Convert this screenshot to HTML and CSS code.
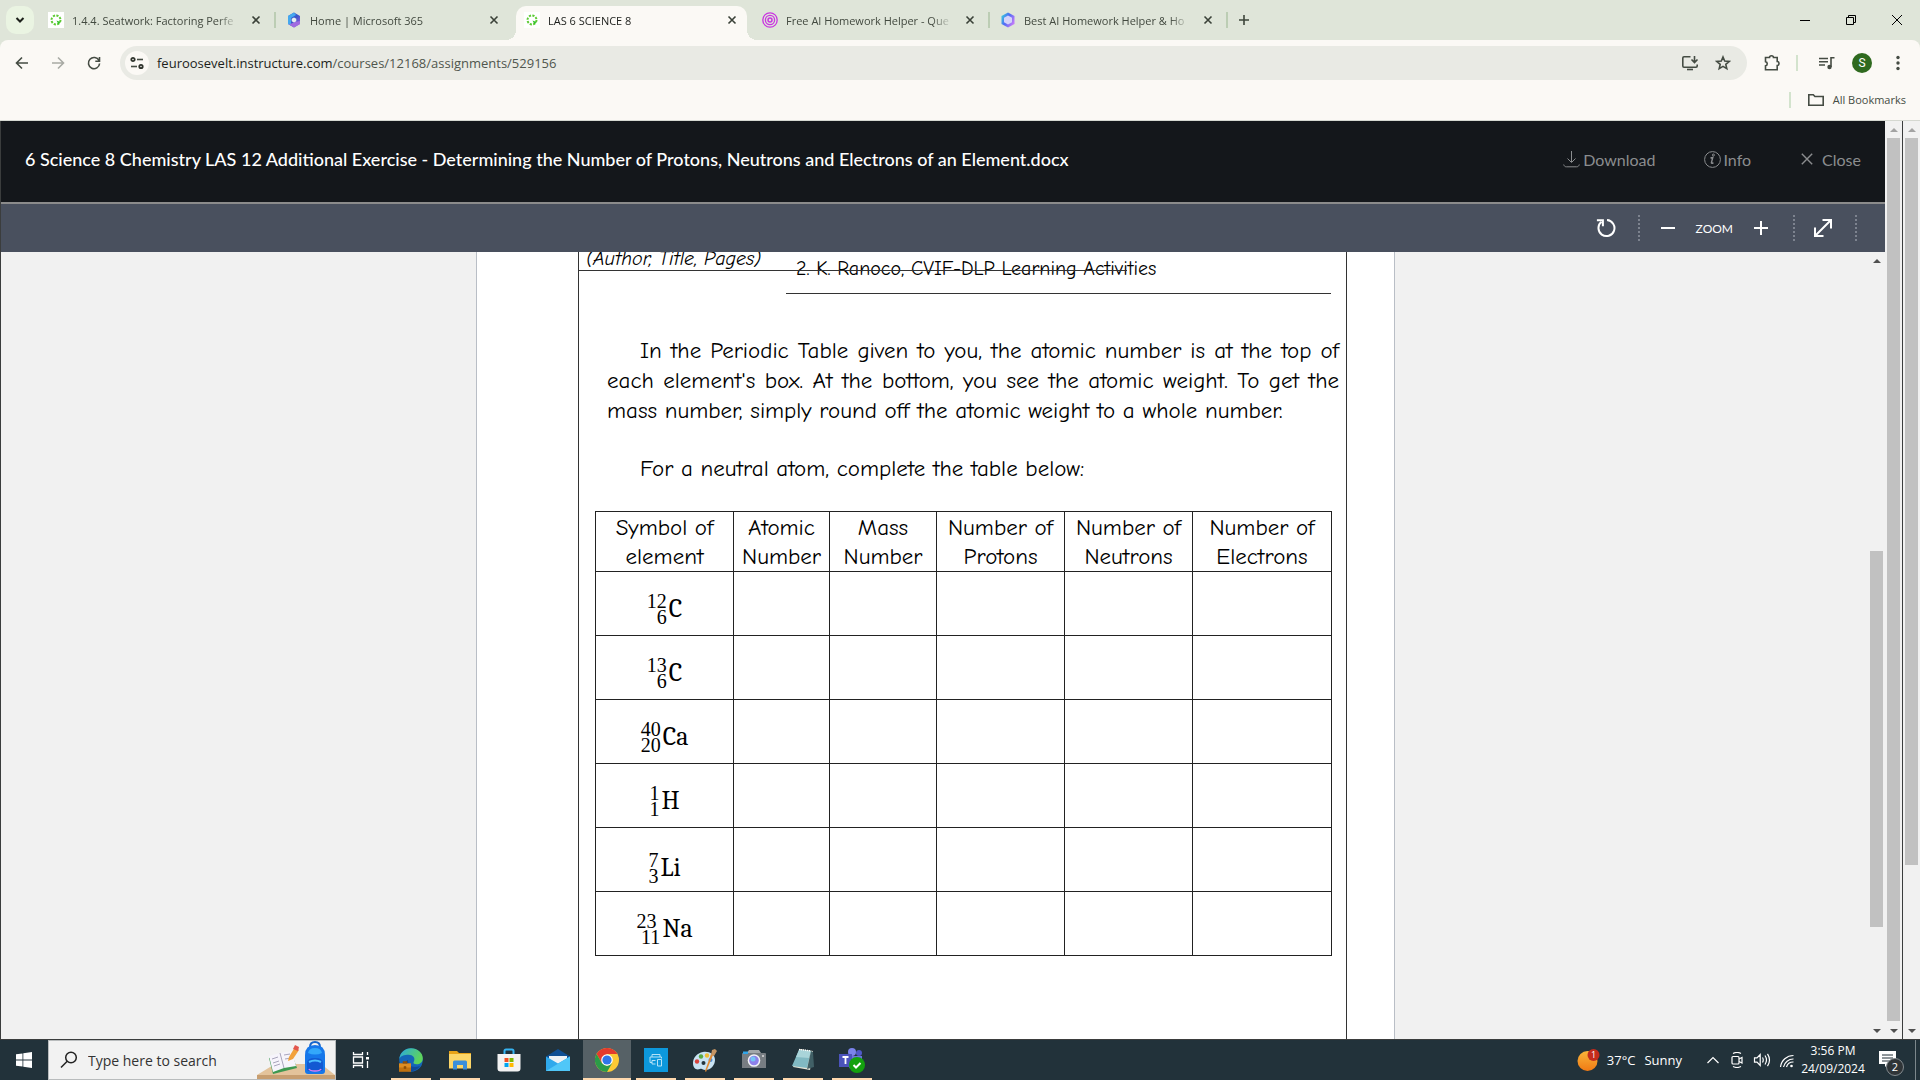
FILE: index.html
```html
<!DOCTYPE html>
<html lang="en">
<head>
<meta charset="utf-8">
<title>LAS 6 SCIENCE 8</title>
<link rel="stylesheet" href="styles.css">
</head>
<body>
<header class="browser">
  <div class="tabstrip">
    <button class="tab-search" aria-label="Search tabs"><svg width="12" height="12" viewBox="0 0 12 12"><path d="M2.5 4l3.5 3.500L9.500 4" fill="none" stroke="#1d211b" stroke-width="2"/></svg></button>
    <div class="tab">
      <svg class="fav" viewBox="0 0 16 16"><rect width="16" height="16" fill="#fff"/><circle cx="8" cy="8" r="4.500" fill="none" stroke="#5ecb34" stroke-width="2" stroke-dasharray="2.200 1.300"/><path d="M8.500 8.500l4 1.500-2 2.500z" fill="#34c42c"/></svg>
      <span class="tab-title">1.4.4. Seatwork: Factoring Perfe</span>
      <button class="tab-close" aria-label="Close tab"><svg width="10" height="10" viewBox="0 0 10 10"><path d="M1.500 1.500l7 7m0-7l-7 7"/></svg></button>
    </div>
    <i class="tab-sep"></i>
    <div class="tab">
      <svg class="fav" viewBox="0 0 16 16"><defs><linearGradient id="m1" x1="0" y1="0" x2="1" y2="1"><stop offset="0" stop-color="#2b6de0"/><stop offset=".5" stop-color="#3a55c8"/><stop offset="1" stop-color="#b35fe0"/></linearGradient></defs><path d="M8 .5l6 3.500v8L8 15.500 2 12V4z" fill="url(#m1)"/><path d="M8 .5L2 4v8l3 1.500V6l5-3z" fill="#45a8ee"/><path d="M14 9v3l-6 3.500-5-3 6-2.500z" fill="#a06ae0"/><path d="M8 5.500l2.300 1.200v2.600L8 10.500 5.700 9.300V6.700z" fill="#e8edf0"/></svg>
      <span class="tab-title">Home | Microsoft 365</span>
      <button class="tab-close" aria-label="Close tab"><svg width="10" height="10" viewBox="0 0 10 10"><path d="M1.500 1.500l7 7m0-7l-7 7"/></svg></button>
    </div>
    <i class="tab-sep hidden"></i>
    <div class="tab active">
      <svg class="fav" viewBox="0 0 16 16"><rect width="16" height="16" fill="#fff"/><circle cx="8" cy="8" r="4.500" fill="none" stroke="#5ecb34" stroke-width="2" stroke-dasharray="2.200 1.300"/><path d="M8.500 8.500l4 1.500-2 2.500z" fill="#34c42c"/></svg>
      <span class="tab-title">LAS 6 SCIENCE 8</span>
      <button class="tab-close" aria-label="Close tab"><svg width="10" height="10" viewBox="0 0 10 10"><path d="M1.500 1.500l7 7m0-7l-7 7"/></svg></button>
    </div>
    <i class="tab-sep hidden"></i>
    <div class="tab">
      <svg class="fav" viewBox="0 0 16 16" fill="none" stroke="#c935e0"><circle cx="8" cy="8" r="7.200" stroke-width="1.300"/><circle cx="8" cy="8" r="4.600" stroke-width="1.300"/><circle cx="8" cy="8" r="2" stroke-width="1.500"/></svg>
      <span class="tab-title">Free AI Homework Helper - Que</span>
      <button class="tab-close" aria-label="Close tab"><svg width="10" height="10" viewBox="0 0 10 10"><path d="M1.500 1.500l7 7m0-7l-7 7"/></svg></button>
    </div>
    <i class="tab-sep"></i>
    <div class="tab">
      <svg class="fav" viewBox="0 0 16 16"><defs><linearGradient id="g2" x1="0" y1="0" x2="1" y2=".6"><stop offset="0" stop-color="#35e0d8"/><stop offset=".5" stop-color="#4f6cf5"/><stop offset="1" stop-color="#c07af8"/></linearGradient></defs><path d="M8 .5l6.500 3.500v8L8 15.500 1.500 12V4z" fill="url(#g2)"/><path d="M8 3.500l4 2.200v4.600l-4 2.200-4-2.200V5.700z" fill="#d5d2fa"/></svg>
      <span class="tab-title">Best AI Homework Helper &amp; Ho</span>
      <button class="tab-close" aria-label="Close tab"><svg width="10" height="10" viewBox="0 0 10 10"><path d="M1.500 1.500l7 7m0-7l-7 7"/></svg></button>
    </div>
    <i class="tab-sep"></i>
    <button class="new-tab" aria-label="New tab"><svg width="12" height="12" viewBox="0 0 12 12"><path d="M6 1v10M1 6h10" stroke="#3d453a" stroke-width="1.600"/></svg></button>
    <div class="window-buttons">
      <button aria-label="Minimize"><svg width="12" height="12" viewBox="0 0 12 12"><path d="M1 6.500h10"/></svg></button>
      <button aria-label="Restore"><svg width="12" height="12" viewBox="0 0 12 12"><path d="M1.500 3.500h7v7h-7zM3.500 3.500v-2h7v7h-2"/></svg></button>
      <button aria-label="Close"><svg width="12" height="12" viewBox="0 0 12 12"><path d="M1 1l10 10M11 1L1 11"/></svg></button>
    </div>
  </div>
  <div class="toolbar">
    <nav class="nav-buttons">
      <button aria-label="Back"><svg width="16" height="16" viewBox="0 0 16 16"><path d="M14 8H3M8 2.500L2.500 8 8 13.500"/></svg></button>
      <button class="dim" aria-label="Forward"><svg width="16" height="16" viewBox="0 0 16 16"><path d="M2 8h11M8 2.500L13.500 8 8 13.500"/></svg></button>
      <button aria-label="Reload"><svg width="16" height="16" viewBox="0 0 16 16"><path d="M13 5.500A5.600 5.600 0 1 0 13.600 8.500M13.500 2v4.200H9.300"/></svg></button>
    </nav>
    <div class="omnibox">
      <button class="site-info" aria-label="Site information"><svg width="16" height="16" viewBox="0 0 16 16" fill="none" stroke="#2e332c" stroke-width="1.800"><circle cx="4" cy="4.500" r="1.700"/><path d="M8 4.500h6"/><circle cx="12" cy="11.500" r="1.700"/><path d="M2 11.500h6"/></svg></button>
      <a class="url" href="#">feuroosevelt.instructure.com<span>/courses/12168/assignments/529156</span></a>
      <button aria-label="Install"><svg width="18" height="16" viewBox="0 0 18 16"><path d="M9.500 1.800H3a1.200 1.200 0 0 0-1.200 1.200v8A1.200 1.200 0 0 0 3 12.200h12a1.200 1.200 0 0 0 1.200-1.200V9.500M13.500 1v6M10.500 4.500l3 3 3-3"/><path d="M6 14.500h6" stroke-width="2"/></svg></button>
      <button aria-label="Bookmark"><svg width="16" height="16" viewBox="0 0 16 16"><path d="M8 2l1.700 4.100 4.400.4-3.300 2.900 1 4.300L8 11.400l-3.800 2.300 1-4.300L1.900 6.500l4.400-.4z" stroke-width="1.400"/></svg></button>
    </div>
    <button class="ext" aria-label="Extensions"><svg width="18" height="18" viewBox="0 0 18 18"><path d="M2.500 3.500h4a2 1.800 0 0 1 4 0h3.700v4a1.800 2 0 0 1 0 4v4.300H2.500v-3.900a2.200 2.200 0 0 0 0-4.300z"/></svg></button>
    <i class="bar-sep"></i>
    <button class="media" aria-label="Media"><svg width="18" height="16" viewBox="0 0 18 16"><path d="M1 3.500h9M1 6.800h9M1 10h6M13 12V2.800h3.500"/><circle cx="11.500" cy="12" r="2.200" fill="#454c43" stroke="none"/></svg></button>
    <button class="avatar" aria-label="Profile">S</button>
    <button class="menu" aria-label="Menu"><svg width="4" height="16" viewBox="0 0 4 16"><g fill="#454c43" stroke="none"><circle cx="2" cy="2.500" r="1.700"/><circle cx="2" cy="8" r="1.700"/><circle cx="2" cy="13.500" r="1.700"/></g></svg></button>
  </div>
  <div class="bookmarks">
    <i class="bar-sep"></i>
    <button><svg width="18" height="14" viewBox="0 0 18 14"><path d="M1.800 1.800h4.500l1.600 1.700h8.300v8.700H1.800z"/></svg>All Bookmarks</button>
  </div>
</header>

<main class="frame">
  <section class="preview">
    <div class="preview-head">
      <h1>6 Science 8 Chemistry LAS 12 Additional Exercise - Determining the Number of Protons, Neutrons and Electrons of an Element.docx</h1>
      <nav class="preview-actions">
        <a href="#"><svg width="17" height="17" viewBox="0 0 17 17"><path d="M8.500 0v11M4.500 7.500l4 4 4-4M.7 13.500c.6 1.800 1.300 2.300 2.800 2.300h10c1.500 0 2.200-.5 2.800-2.300"/></svg>Download</a>
        <a class="info" href="#"><svg width="17" height="17" viewBox="0 0 17 17"><circle cx="8.500" cy="8.500" r="7.900"/><path d="M6.500 7l2.300-.6-1.400 5.200c-.2 1 .8.900 2 0" stroke-width="1.400"/><circle cx="9.400" cy="4" r="1" fill="#8b8d8f" stroke="none"/></svg>Info</a>
        <a class="close" href="#"><svg width="12" height="12" viewBox="0 0 12 12"><path d="M.8.8l10.400 10.400M11.200.8L.8 11.200" stroke-width="1.400"/></svg>Close</a>
      </nav>
    </div>
    <div class="doc-tools">
      <button class="rotate" aria-label="Rotate"><svg width="20" height="20" viewBox="0 0 20 20"><path d="M5.500 3.800A8 8 0 1 0 11 2.100" stroke-width="2"/><path d="M.9 2.300h6v6" stroke-width="2"/></svg></button>
      <i class="dots"></i>
      <button class="minus" aria-label="Zoom out"><svg width="14" height="14" viewBox="0 0 14 14"><path d="M0 7h14" stroke-width="2"/></svg></button>
      <span class="zoom-label">ZOOM</span>
      <button class="plus" aria-label="Zoom in"><svg width="14" height="14" viewBox="0 0 14 14"><path d="M0 7h14M7 0v14" stroke-width="2"/></svg></button>
      <i class="dots"></i>
      <button class="expand" aria-label="Full screen"><svg width="18" height="18" viewBox="0 0 18 18"><path d="M2 16L16 2M8.500 1H17v8.500M1 8.500V17h8.500" stroke-width="2"/></svg></button>
      <i class="dots"></i>
    </div>
    <div class="viewer">
      <div class="canvas">
        <article class="page">
          <div class="sheet">
            <div class="reference">
              <p class="ref-label">(Author, Title, Pages)</p>
              <p class="ref-text">2. K. Ranoco, CVIF-DLP Learning Activities</p>
              <i class="rule"></i>
            </div>
            <p class="para"><span class="just first">In the Periodic Table given to you, the atomic number is at the top of</span> <span class="just">each element's box. At the bottom, you see the atomic weight. To get the</span> <span class="last">mass number, simply round off the atomic weight to a whole number.</span></p>
            <p class="para lead"><span class="first">For a neutral atom, complete the table below:</span></p>
            <table class="atoms">
              <colgroup><col class="c-sym"><col class="c-atomic"><col class="c-mass"><col class="c-num"><col class="c-num"><col class="c-elec"></colgroup>
              <thead><tr><th>Symbol of<br>element</th><th>Atomic<br>Number</th><th>Mass<br>Number</th><th>Number of<br>Protons</th><th>Number of<br>Neutrons</th><th>Number of<br>Electrons</th></tr></thead>
              <tbody>
                <tr><td><span class="nuclide"><span class="nums"><span>12</span><span>6</span></span>C</span></td><td></td><td></td><td></td><td></td><td></td></tr>
                <tr><td><span class="nuclide"><span class="nums"><span>13</span><span>6</span></span>C</span></td><td></td><td></td><td></td><td></td><td></td></tr>
                <tr><td><span class="nuclide"><span class="nums"><span>40</span><span>20</span></span>Ca</span></td><td></td><td></td><td></td><td></td><td></td></tr>
                <tr><td><span class="nuclide"><span class="nums"><span>1</span><span>1</span></span>H</span></td><td></td><td></td><td></td><td></td><td></td></tr>
                <tr class="low"><td><span class="nuclide"><span class="nums"><span>7</span><span>3</span></span>Li</span></td><td></td><td></td><td></td><td></td><td></td></tr>
                <tr><td><span class="nuclide"><span class="nums wide"><span>23</span><span>11</span></span>Na</span></td><td></td><td></td><td></td><td></td><td></td></tr>
              </tbody>
            </table>
          </div>
        </article>
      </div>
      <div class="scroll inner"><i class="up dark"></i><div class="track"><i class="thumb"></i></div><i class="down"></i></div>
    </div>
  </section>
  <div class="scroll middle"><i class="up"></i><div class="track"><i class="thumb"></i></div><i class="down"></i></div>
  <div class="scroll outer"><i class="up"></i><div class="track"><i class="thumb"></i></div><i class="down"></i></div>
</main>

<footer class="taskbar">
  <button class="start" aria-label="Start"><svg width="16" height="16" viewBox="0 0 16 16" fill="#fff"><path d="M0 2.300L6.500 1.400v6.200H0zM7.300 1.300L16 0v7.600H7.300zM0 8.400h6.500v6.200L0 13.700zM7.300 8.400H16V16l-8.700-1.300z"/></svg></button>
  <label class="search">
    <svg width="18" height="18" viewBox="0 0 18 18" fill="none" stroke="#222" stroke-width="1.500"><circle cx="11" cy="6.500" r="5.300"/><path d="M7.200 10.300L1 16.500"/></svg>
    <input type="text" placeholder="Type here to search" aria-label="Search">
    <svg class="search-art" width="78" height="38" viewBox="0 0 78 38"><path d="M0 34L18 23h46l14 11z" fill="#e3c39b"/><path d="M0 34h78v4H0z" fill="#c79e70"/><path d="M12 17l22-6 6 16-24 6z" fill="#3d9950"/><path d="M12 15l11-3 12-2 4 15-12 2-11 4z" fill="#f6f4fb"/><path d="M23 12l4 15M15 18l6-2M16 22l6-2M17 25l6-2M27 14l6-1M28 18l6-1" stroke="#a9a5bc" stroke-width="1" fill="none"/><path d="M32 16l6-10 4 3-6 9-5 2z" fill="#f2a23b"/><path d="M36 8l2-4 4 2-1 4z" fill="#e2564d"/><path d="M53 6q0-5 5-5t5 5" fill="none" stroke="#1766cc" stroke-width="2"/><path d="M48 14q0-10 10-10t10 10v16q0 3-3 3H51q-3 0-3-3z" fill="#1677ea"/><path d="M51 12q1-5 7-5t7 5q-7 3-14 0" fill="#33a7fa"/><path d="M50 22q0-5 8-5t8 5v6q0 2-2 2H52q-2 0-2-2z" fill="#1259d2"/><path d="M52 28q1 2 6 2t6-2" stroke="#d77df2" fill="none" stroke-width="1.500"/><path d="M52 21q6-3 12 0" stroke="#4dc0ff" fill="none" stroke-width="2"/></svg>
  </label>
  <nav class="apps">
    <button class="task-view" aria-label="Task view"><svg width="18" height="16" viewBox="0 0 18 16" fill="none" stroke="#fff" stroke-width="1.300"><path d="M1.500 0v2.500h9V0M1.500 5h9v6h-9zM1.500 16v-2.500h9V16M15.500 0v3M15.500 9v7"/><path d="M14 5h3v2.500h-3z" fill="#fff" stroke="none"/></svg></button>
    <button class="open" aria-label="Edge"><svg width="24" height="24" viewBox="0 0 24 24"><defs><linearGradient id="e1" x1="0" y1="0" x2="1" y2=".4"><stop offset="0" stop-color="#2aa8e0"/><stop offset="1" stop-color="#5ed45a"/></linearGradient></defs><circle cx="12" cy="12" r="11.800" fill="#1465b8"/><path d="M.3 11C1 4.500 6 .2 12 .2c6.500 0 11.800 4.500 11.800 10 0 4-3 6-6 6-3 0-4-1-3-2.500 2-4-1-7-5-7C5 6.700 1.500 8 .3 11z" fill="url(#e1)"/><path d="M9 12c0 6 5 8.500 12 6-3 5-9 6.500-14 4-3-3-2.500-8 2-10z" fill="#0f4a98"/><path d="M0 15.500h12v8.300H0z" fill="#c0720f"/><path d="M0 15.500h12v4H0z" fill="#dc8d22"/><path d="M4 15.500v-2h4v2M5 18.500h2v2H5z" fill="#8c4f08" stroke="#8c4f08" stroke-width=".6"/></svg></button>
    <button class="open" aria-label="File Explorer"><svg width="24" height="20" viewBox="0 0 24 20"><path d="M1 1h8l2 2h12v15H1z" fill="#e8a317"/><path d="M1 4h22v14.500H1z" fill="#fcd668"/><path d="M5 19.500V12q0-1.500 1.500-1.500h11q1.500 0 1.500 1.500v7.500h-4V15H9v4.500z" fill="#3a8fdc"/></svg></button>
    <button aria-label="Store"><svg width="24" height="24" viewBox="0 0 24 24"><path d="M7.500 7V3q0-1.500 1.500-1.500h6q1.500 0 1.500 1.500v4" fill="none" stroke="#36b4f2" stroke-width="2"/><path d="M.5 6h23v14.500a3 3 0 0 1-3 3h-17a3 3 0 0 1-3-3z" fill="#f3f3f3"/><path d="M7.500 10h4v4h-4z" fill="#f25022"/><path d="M12.500 10h4v4h-4z" fill="#7fba00"/><path d="M7.500 15h4v4h-4z" fill="#00a4ef"/><path d="M12.500 15h4v4h-4z" fill="#ffb900"/></svg></button>
    <button aria-label="Mail"><svg width="24" height="22" viewBox="0 0 24 22"><path d="M0 7.500L12 0l12 7.500V22H0z" fill="#104f93"/><path d="M3 7h18v9H3z" fill="#eef2f5"/><path d="M0 7.500l12 7 12-7V22H0z" fill="#2fa9ec"/><path d="M0 22L24 7.500V22z" fill="#50c7f8"/></svg></button>
    <button class="open current" aria-label="Chrome"><svg width="24" height="24" viewBox="0 0 24 24"><circle cx="12" cy="12" r="12" fill="#fcc934"/><path d="M12 6h10.400A12 12 0 0 0 1.600 6L6.800 15z" fill="#e33b2e"/><path d="M1.600 6l5.200 9L12 18l5.200-3L12 24A12 12 0 0 1 1.600 6z" fill="#2b9b48"/><circle cx="12" cy="12" r="5.800" fill="#fff"/><circle cx="12" cy="12" r="4.600" fill="#2f76e8"/></svg></button>
    <button class="open" aria-label="Printer"><svg width="24" height="24" viewBox="0 0 24 24"><path d="M0 0h24v24H0z" fill="#0d98dc"/><path d="M8 9V6.500h8V9M11.500 16H8v-3.500h3.500M8 14.500H6V9h11.500v1.500M13.500 11.500h4v6.500h-4z" fill="none" stroke="#b5e2f7" stroke-width="1"/></svg></button>
    <button class="open" aria-label="Paint"><svg width="24" height="24" viewBox="0 0 24 24"><path d="M10 4C4 5 0 10 0 15c0 5 3 7.500 7 6 2-1 3 1 5 1 6 0 10-5 10-10 0-6-6-9-12-8z" fill="#c9e3f3"/><circle cx="4" cy="13.500" r="2.200" fill="#d9433c"/><circle cx="8" cy="8.500" r="2.200" fill="#58a944"/><circle cx="14" cy="7.500" r="2.200" fill="#f0bd35"/><circle cx="17.500" cy="12" r="2" fill="#4a8bd8"/><circle cx="10.500" cy="15" r="2" fill="#25343c"/><path d="M20 7L13 24l-1-1 6-17z" fill="#e28a33"/><path d="M18 7l1-5 3-1 2 2-3 5z" fill="#c69563"/></svg></button>
    <button class="open" aria-label="Camera"><svg width="24" height="20" viewBox="0 0 24 20"><path d="M7 0h10l2 3H5z" fill="#a2a7aa"/><path d="M1 3h22q1 0 1 1v14H0V4q0-1 1-1z" fill="#777d82"/><path d="M1 1.500h5V4H1z" fill="#30a5e8"/><circle cx="12" cy="10.500" r="6.300" fill="#f2f3f8"/><circle cx="12" cy="10.500" r="4.800" fill="#8d80ea"/><circle cx="11" cy="9" r="2.500" fill="#75c4f5"/><circle cx="21" cy="6" r="1" fill="#d8d8d8"/></svg></button>
    <button class="open" aria-label="Notepad"><svg width="24" height="24" viewBox="0 0 24 24"><path d="M9 1l13 2-3 19-17-3z" fill="#e7e4d5"/><path d="M8 2l12 1-4 17-15-2z" fill="#81b9c2"/><path d="M8 2l12 1-2 7-13-1z" fill="#a9d4d9"/><path d="M20 3l2 1 1 15-7 2z" fill="#416066"/><path d="M8 1.500l12 1.500" stroke="#fff" stroke-width="1.500" stroke-dasharray="1 1"/></svg></button>
    <button class="open" aria-label="Teams"><svg width="26" height="26" viewBox="0 0 26 26"><circle cx="13" cy="5" r="4" fill="#7b83eb"/><circle cx="20" cy="6" r="3" fill="#5059c9"/><path d="M9 9h14v9q-3 5-8 5t-6-6z" fill="#6b73dc"/><path d="M0 7h13v13H0z" fill="#4b53bc"/><path d="M3.500 10h6M6.500 10v7" stroke="#fff" stroke-width="1.800"/><circle cx="18" cy="18" r="8" fill="#13a10e"/><path d="M14.500 18l2.500 2.500 4.500-4.500" fill="none" stroke="#fff" stroke-width="2"/></svg></button>
  </nav>
  <div class="tray">
    <button class="weather"><svg width="24" height="24" viewBox="0 0 24 24"><defs><linearGradient id="w1" x1="0" y1="0" x2="0" y2="1"><stop offset="0" stop-color="#f9b53a"/><stop offset="1" stop-color="#f07a14"/></linearGradient></defs><circle cx="10.500" cy="13" r="10" fill="url(#w1)"/><circle cx="16.500" cy="7" r="6" fill="#c42b1c"/><text x="16.500" y="10" text-anchor="middle" font-size="9" fill="#fff">1</text></svg><span>37°C</span><span>Sunny</span></button>
    <div class="tray-icons">
      <svg width="16" height="16" viewBox="0 0 16 16"><path d="M2.500 11L8 5.500l5.500 5.500"/></svg>
      <svg width="16" height="16" viewBox="0 0 16 16"><rect x="3" y="4.500" width="7" height="7.500" rx="1"/><path d="M10 7l3-1.500v5.500l-3-1.500M4 1.500Q8-.5 12 1.500M4 14.500q4 2 8 0"/></svg>
      <svg width="18" height="16" viewBox="0 0 18 16"><path d="M1.500 5.800H4l3.200-3.300v11L4 10.200H1.500zM9.500 5.500q1.500 2.500 0 5M12 3.500q3 4.500 0 9M14.500 1.800q4 6.200 0 12.400"/></svg>
      <svg width="16" height="16" viewBox="0 0 16 16"><path d="M1.500 15A13 13 0 0 1 14.500 3.500M4.500 15a10 10 0 0 1 10-8M7.500 15a7 7 0 0 1 7-5"/><circle cx="12.500" cy="14" r="1.300" fill="#fff"/></svg>
    </div>
    <div class="clock"><time>3:56 PM</time><time>24/09/2024</time></div>
    <button class="notes" aria-label="Notifications"><svg width="18" height="16" viewBox="0 0 18 16"><path d="M0 0h17v13H9l-3 3v-3H0z" fill="#fff"/><path d="M3 4h11M3 7h11M3 10h8" stroke="#1f2d34" stroke-width="1"/></svg><span class="badge">2</span></button>
    <i class="peek"></i>
  </div>
</footer>
</body>
</html>
```

FILE: styles.css
```css
* { box-sizing: border-box; }
html, body { height: 100%; }
body {
  margin: 0;
  display: flex;
  flex-direction: column;
  overflow: hidden;
  font-family: "Open Sans", "Noto Sans", sans-serif;
  font-size: 11px;
}
button { border: 0; padding: 0; margin: 0; background: none; font: inherit; color: inherit; display: flex; align-items: center; justify-content: center; }
a { color: inherit; text-decoration: none; }
p, h1 { margin: 0; }
svg { display: block; flex: none; }
i { flex: none; }

/* Browser window */
.browser { flex: none; background: #dfe5d9; }
.tabstrip { display: flex; height: 40px; align-items: center; padding-left: 6px; }
.tab-search { width: 28px; height: 28px; border-radius: 10px; background: #eaf4e2; margin-right: 6px; }
.tab { display: flex; align-items: center; width: 231px; height: 34px; align-self: flex-end; padding: 0 10px 6px 8px; color: #434a40; }
.fav { width: 16px; height: 16px; margin-right: 8px; }
.tab-title { flex: 1; white-space: nowrap; overflow: hidden; -webkit-mask-image: linear-gradient(90deg, #000 88%, transparent); mask-image: linear-gradient(90deg, #000 88%, transparent); }
.tab-close { width: 10px; margin-left: 13px; }
.tab-close path { fill: none; stroke: #3a4138; stroke-width: 1.600; }
.tab-sep { width: 2px; height: 16px; background: #bccdb4; margin: 0 2px 0 3px; }
.tab-sep.hidden { background: none; }
.tab.active { position: relative; background: #fbf9f5; border-radius: 10px 10px 0 0; color: #1c1e1b; }
.tab.active::before, .tab.active::after { content: ""; position: absolute; bottom: 0; width: 10px; height: 10px; }
.tab.active::before { right: 100%; background: radial-gradient(circle at 0 0, transparent 10px, #fbf9f5 10px); }
.tab.active::after { left: 100%; background: radial-gradient(circle at 100% 0, transparent 10px, #fbf9f5 10px); }
.new-tab { width: 28px; height: 28px; }
.window-buttons { margin-left: auto; display: flex; }
.window-buttons button { width: 46px; height: 40px; }
.window-buttons path { fill: none; stroke: #000; stroke-width: 1; }
.toolbar { display: flex; align-items: center; height: 46px; padding: 0 20px 0 12px; background: #fbf9f5; border-radius: 8px 8px 0 0; }
.nav-buttons { display: flex; gap: 16px; }
.nav-buttons button { width: 20px; height: 20px; }
.nav-buttons .dim { opacity: .45; }
.toolbar path, .bookmarks path { fill: none; stroke: #454c43; stroke-width: 1.600; }
.omnibox { display: flex; align-items: center; flex: 1; height: 34px; margin: 0 16px; padding: 0 16px 0 5px; border-radius: 17px; background: #e9eae4; gap: 16px; }
.site-info { width: 24px; height: 24px; border-radius: 12px; background: #fbf9f5; margin-right: -8px; }
.url { flex: 1; font-size: 13px; color: #1c1e1b; }
.url span { color: #50564e; }
.bar-sep { width: 2px; height: 16px; background: #d3e3cd; }
.ext { margin-right: 15px; }
.media { margin: 0 16px 0 20px; }
.avatar { width: 20px; height: 20px; border-radius: 10px; background: #2f6a1f; color: #fff; font-family: Roboto, sans-serif; font-size: 12px; }
.menu { margin-left: 24px; }
.bookmarks { display: flex; align-items: center; justify-content: flex-end; height: 35px; padding: 0 14px 7px 0; background: #fbf9f5; border-bottom: 1px solid #d5d8d1; gap: 16px; }
.bookmarks button { gap: 8px; color: #454c43; height: 28px; }

/* Document preview */
.frame { flex: 1; min-height: 0; display: flex; background: #f1f1f1; border-bottom: 1px solid #3b3d3d; border-left: 1px solid #3b3d3d; }
.preview { flex: 1; min-width: 0; display: flex; flex-direction: column; }
.preview-head { display: flex; align-items: center; justify-content: space-between; height: 83px; flex: none; padding: 0 24px 5px; background: #14171b; border-bottom: 2px solid #8b8b8b; font-family: Lato, sans-serif; }
.preview-head h1 { font-size: 18px; font-weight: 500; color: #fff; white-space: nowrap; }
.preview-actions { display: flex; font-size: 16px; color: #8b8d8f; }
.preview-actions a { display: flex; align-items: center; gap: 3px; }
.preview-actions .info { margin-left: 48px; }
.preview-actions .close { margin-left: 50px; gap: 9px; }
.preview-actions path, .preview-actions circle { fill: none; stroke: #8b8d8f; }
.doc-tools { display: flex; align-items: center; justify-content: flex-end; height: 48px; flex: none; padding-right: 28px; background: #49505e; color: #fff; font-family: Lato, sans-serif; font-size: 12px; }
.doc-tools path { fill: none; stroke: #fff; }
.dots { width: 0; height: 26px; border-left: 2px dotted #7d838f; }
.rotate { margin-right: 22px; }
.minus { margin-left: 21px; }
.zoom-label { margin: 0 21px; }
.plus { margin-right: 25px; }
.expand { margin: 0 23px 0 19px; }
.viewer { flex: 1; min-height: 0; display: flex; background: #f1f1f1; }
.canvas { flex: 1; min-width: 0; display: flex; justify-content: center; overflow: hidden; padding-left: 2px; }
.page { width: 919px; padding: 0 47px 0 101px; background: #fff; border: solid #b9bec6; border-width: 0 1px; }
.sheet { display: flow-root; min-height: 100%; border: solid #333; border-width: 0 1px; color: #000; font-family: "Comic Sans MS", "Comic Neue", "Open Sans", sans-serif; }
.reference { position: relative; display: flex; align-items: flex-start; margin-top: -4px; padding-right: 15px; font-size: 20px; line-height: 22px; }
.ref-label { width: 207px; padding-left: 7px; font-style: italic; white-space: nowrap; }
.ref-text { flex: 1; padding: 10px 0 13px 10px; border-bottom: 1px solid #333; }
.rule { position: absolute; left: 0; top: 22px; width: 548px; border-top: 1px solid #333; }
.para { margin: 42px 7px 0 28px; font-size: 23px; line-height: 30px; }
.para span { display: block; white-space: nowrap; }
.para .just { text-align: justify; text-align-last: justify; white-space: normal; }
.para .first { padding-left: 33px; }
.para.lead { margin-top: 28px; }
.atoms { width: 736px; margin: 27px 0 0 16px; border-collapse: collapse; table-layout: fixed; }
.c-sym { width: 138px; }
.c-atomic { width: 96px; }
.c-mass { width: 107px; }
.c-num { width: 128px; }
.c-elec { width: 139px; }
.atoms th, .atoms td { border: 1px solid #222; padding: 0; text-align: center; }
.atoms th { height: 60px; font-size: 23px; font-weight: 400; line-height: 29px; }
.atoms td { height: 64px; padding-top: 10px; }
.atoms .low td { padding-top: 16px; }
.nuclide { display: inline-flex; align-items: center; gap: 2px; vertical-align: middle; font-family: Cambria, "Liberation Serif", serif; font-size: 26px; line-height: 32px; }
.nums { display: flex; flex-direction: column; align-items: flex-end; font-family: "Liberation Serif", serif; font-size: 20px; line-height: 16px; }
.nums.wide span:first-child { padding-right: 4px; }

/* Scroll bars */
.scroll { width: 17px; flex: none; display: flex; flex-direction: column; background: #f1f1f1; }
.scroll .up, .scroll .down { height: 17px; display: flex; align-items: center; justify-content: center; }
.scroll .up::before, .scroll .down::before { content: ""; border: 4px solid transparent; }
.scroll .up::before { border-top: 0; border-bottom-color: #a3a3a3; }
.scroll .up.dark::before { border-bottom-color: #505050; }
.scroll .down::before { border-bottom: 0; border-top-color: #505050; }
.scroll .track { flex: 1; display: flex; flex-direction: column; padding: 0 2px; }
.thumb { background: #c1c1c1; width: 13px; }
.inner .track { padding-top: 282px; }
.inner .thumb { height: 376px; }
.middle .thumb { height: 883px; }
.outer { width: 18px; border-left: 1px solid #3b3d3d; }
.outer .thumb { height: 727px; }

/* Taskbar */
.taskbar { flex: none; display: flex; height: 40px; background: #22323a; color: #fff; }
.start { width: 48px; }
.search { display: flex; align-items: center; width: 288px; background: #f2f2f2; border: 1px solid #b9bcbd; padding-left: 11px; }
.search input { flex: 1; min-width: 0; border: 0; outline: 0; padding: 0 0 0 10px; background: none; font: 14px "Open Sans", sans-serif; }
.search input::placeholder { color: #333; opacity: 1; }
.search-art { align-self: flex-end; }
.apps { display: flex; gap: 1px; }
.apps button { width: 48px; }
.apps .task-view { width: 50px; }
.apps .open { background: linear-gradient(#ffd9ae, #ffd9ae) center bottom / 40px 2px no-repeat; }
.apps .current { background: linear-gradient(#ffd9ae, #ffd9ae) center bottom / 48px 2px no-repeat #566166; }
.tray { margin-left: auto; display: flex; align-items: center; }
.weather { gap: 9px; font-size: 13px; }
.weather svg { margin-right: -3px; }
.tray-icons { display: flex; gap: 8px; margin-left: 23px; }
.tray-icons path, .tray-icons rect { fill: none; stroke: #fff; stroke-width: 1.200; }
.clock { display: flex; flex-direction: column; align-items: center; width: 76px; font-size: 12px; line-height: 18px; }
.notes { position: relative; width: 44px; height: 40px; padding: 0 11px 2px 0; }
.badge { position: absolute; left: 15px; top: 18px; width: 18px; height: 18px; border-radius: 9px; border: 1px solid #848b8f; background: #2f3437; font-size: 11px; line-height: 16px; text-align: center; }
.peek { width: 5px; height: 40px; border-left: 1px solid #7c878c; }
```
